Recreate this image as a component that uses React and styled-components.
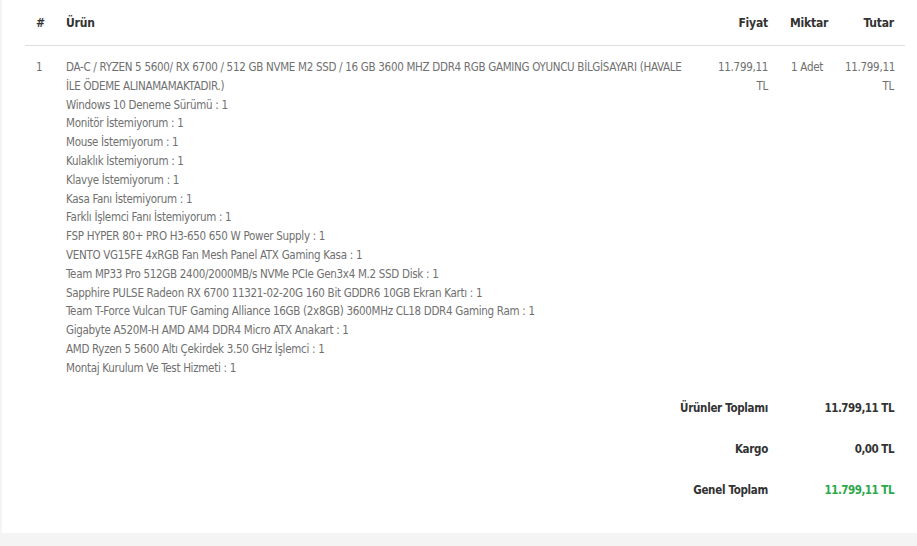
import styled, { createGlobalStyle } from "styled-components";

const Global = createGlobalStyle`
  body {
    margin: 0;
    background: #f4f4f4;
    font-family: "DejaVu Sans Condensed", "Liberation Sans", sans-serif;
  }
`;

const Card = styled.div`
  margin-left: 2px;
  background: #fff;
  padding: 0 12px 23px 23px;
  height: 510px;
`;

const Grid = styled.div`
  display: grid;
  grid-template-columns: 30px 1fr 73px 55px 71px;
`;

const Head = styled.div`
  padding: 14px 11px 12px;
  font-size: 12px;
  line-height: 19px;
  font-weight: 700;
  letter-spacing: -0.2px;
  color: #333;
  text-align: ${(p) => (p.$right ? "right" : "left")};
  border-bottom: 1px solid #dedede;
`;

const Cell = styled.div`
  padding: 12px 11px 10px;
  font-size: 11.5px;
  line-height: 18.8px;
  letter-spacing: -0.3px;
  color: #707070;
  text-align: ${(p) => (p.$right ? "right" : "left")};
  white-space: ${(p) => (p.$nowrap ? "nowrap" : "normal")};
`;

const Line = styled.div``;

const SumLabel = styled.div`
  grid-column: 1 / 4;
  padding: 0 11px;
  height: 41px;
  display: flex;
  align-items: center;
  justify-content: flex-end;
  font-size: 11.5px;
  font-weight: 700;
  letter-spacing: -0.3px;
  color: #333;
`;

const SumValue = styled(SumLabel)`
  grid-column: 4 / 6;
  letter-spacing: -0.5px;
  color: ${(p) => (p.$green ? "#2aa84a" : "#333")};
`;

const options = [
  "Windows 10 Deneme Sürümü : 1",
  "Monitör İstemiyorum : 1",
  "Mouse İstemiyorum : 1",
  "Kulaklık İstemiyorum : 1",
  "Klavye İstemiyorum : 1",
  "Kasa Fanı İstemiyorum : 1",
  "Farklı İşlemci Fanı İstemiyorum : 1",
  "FSP HYPER 80+ PRO H3-650 650 W Power Supply : 1",
  "VENTO VG15FE 4xRGB Fan Mesh Panel ATX Gaming Kasa : 1",
  "Team MP33 Pro 512GB 2400/2000MB/s NVMe PCIe Gen3x4 M.2 SSD Disk : 1",
  "Sapphire PULSE Radeon RX 6700 11321-02-20G 160 Bit GDDR6 10GB Ekran Kartı : 1",
  "Team T-Force Vulcan TUF Gaming Alliance 16GB (2x8GB) 3600MHz CL18 DDR4 Gaming Ram : 1",
  "Gigabyte A520M-H AMD AM4 DDR4 Micro ATX Anakart : 1",
  "AMD Ryzen 5 5600 Altı Çekirdek 3.50 GHz İşlemci : 1",
  "Montaj Kurulum Ve Test Hizmeti : 1",
];

export default function App() {
  return (
    <>
      <Global />
      <Card>
        <Grid>
          <Head>#</Head>
          <Head>Ürün</Head>
          <Head $right>Fiyat</Head>
          <Head $right>Miktar</Head>
          <Head $right>Tutar</Head>

          <Cell>1</Cell>
          <Cell>
            <Line>
              DA-C / RYZEN 5 5600/ RX 6700 / 512 GB NVME M2 SSD / 16 GB 3600 MHZ DDR4 RGB GAMING OYUNCU BİLGİSAYARI (HAVALE İLE ÖDEME ALINAMAMAKTADIR.)
            </Line>
            {options.map((o) => (
              <Line key={o}>{o}</Line>
            ))}
          </Cell>
          <Cell $right>11.799,11 TL</Cell>
          <Cell $right $nowrap>1 Adet</Cell>
          <Cell $right>11.799,11 TL</Cell>

          <SumLabel>Ürünler Toplamı</SumLabel>
          <SumValue>11.799,11 TL</SumValue>
          <SumLabel>Kargo</SumLabel>
          <SumValue>0,00 TL</SumValue>
          <SumLabel>Genel Toplam</SumLabel>
          <SumValue $green>11.799,11 TL</SumValue>
        </Grid>
      </Card>
    </>
  );
}
